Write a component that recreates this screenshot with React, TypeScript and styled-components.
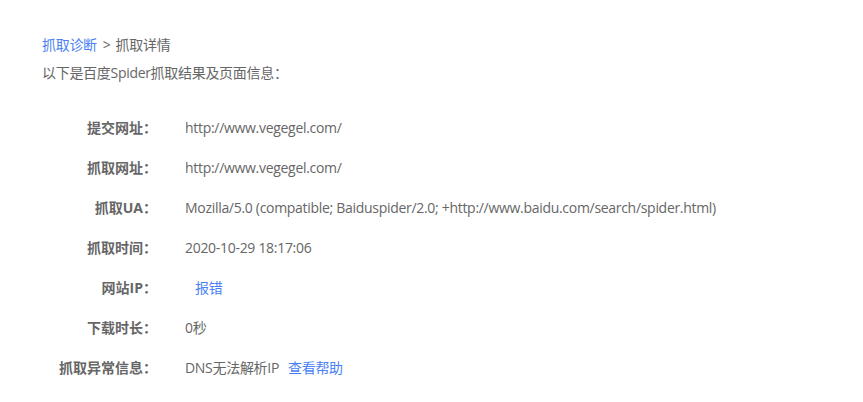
import React from "react";
import styled, { createGlobalStyle } from "styled-components";

const GlobalStyle = createGlobalStyle`
  html, body {
    margin: 0;
    padding: 0;
    background: #fff;
  }
  body {
    font-family: "Open Sans", "Noto Sans CJK SC", sans-serif;
    font-size: 14px;
    letter-spacing: -0.3px;
    color: #666;
  }
`;

const Page = styled.div`
  padding: 34px 0 0 42px;
`;

const Crumbs = styled.div`
  height: 22px;
  line-height: 22px;
  color: #666;

  .sep {
    margin: 0 5px 0 6px;
  }
`;

const Link = styled.a<{ $indent?: number }>`
  color: #4a7ff6;
  text-decoration: none;
  cursor: pointer;
  margin-left: ${(p) => p.$indent || 0}px;
`;

const Intro = styled.p`
  margin: 6px 0 0;
  line-height: 22px;
`;

const InfoTable = styled.div`
  margin-top: 33px;
  display: flex;
  flex-direction: column;
  gap: 18px;
`;

const Row = styled.div`
  display: flex;
  align-items: center;
  height: 22px;
  line-height: 22px;
`;

const Label = styled.div`
  width: 115px;
  text-align: right;
  font-weight: 700;
  letter-spacing: 0;
  color: #666;
  flex-shrink: 0;
`;

const Value = styled.div`
  margin-left: 28px;
  white-space: nowrap;
`;

type Item = {
  label: string;
  value: React.ReactNode;
};

const items: Item[] = [
  { label: "提交网址：", value: "http://www.vegegel.com/" },
  { label: "抓取网址：", value: "http://www.vegegel.com/" },
  {
    label: "抓取UA：",
    value:
      "Mozilla/5.0 (compatible; Baiduspider/2.0; +http://www.baidu.com/search/spider.html)",
  },
  { label: "抓取时间：", value: "2020-10-29 18:17:06" },
  { label: "网站IP：", value: <Link $indent={10}>报错</Link> },
  { label: "下载时长：", value: "0秒" },
  {
    label: "抓取异常信息：",
    value: (
      <>
        DNS无法解析IP<Link $indent={9}>查看帮助</Link>
      </>
    ),
  },
];

const App = () => {
  return (
    <>
      <GlobalStyle />
      <Page>
        <Crumbs>
          <Link>抓取诊断</Link>
          <span className="sep">&gt;</span>
          <span>抓取详情</span>
        </Crumbs>
        <Intro>以下是百度Spider抓取结果及页面信息：</Intro>
        <InfoTable>
          {items.map((item) => (
            <Row key={item.label}>
              <Label>{item.label}</Label>
              <Value>{item.value}</Value>
            </Row>
          ))}
        </InfoTable>
      </Page>
    </>
  );
};

export default App;
